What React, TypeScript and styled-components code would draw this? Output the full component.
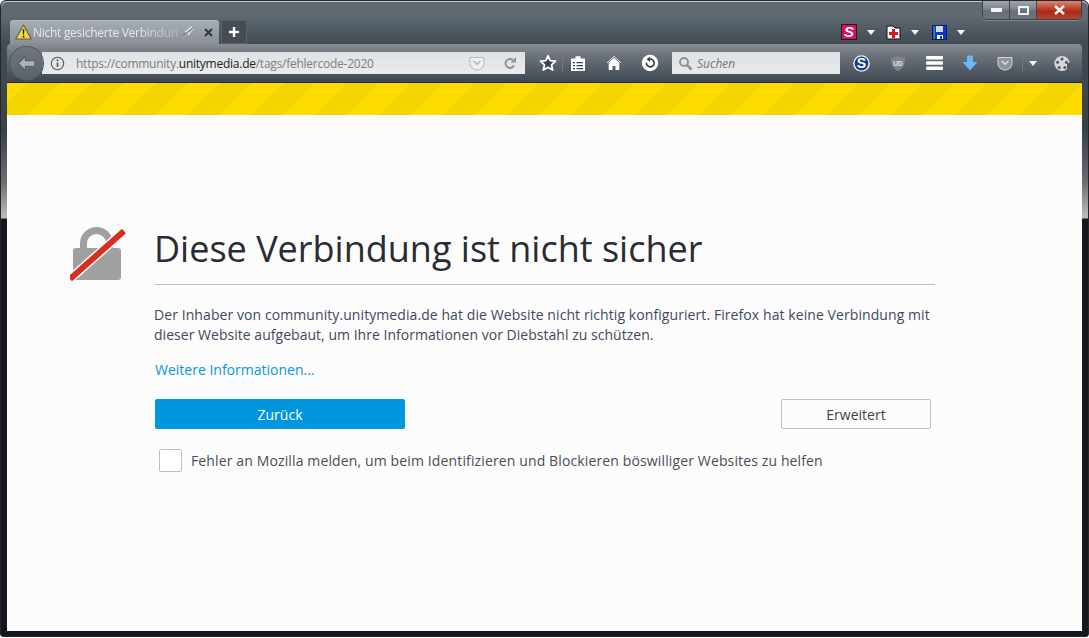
import React from 'react';
import styled, { createGlobalStyle } from 'styled-components';

const GlobalStyle = createGlobalStyle`
  html, body {
    margin: 0;
    padding: 0;
    background: #fff;
    overflow: hidden;
  }
  * {
    box-sizing: border-box;
  }
`;

const Frame = styled.div`
  width: 1089px;
  height: 637px;
  display: flex;
  flex-direction: column;
  border: 1px solid #23272c;
  border-radius: 6px 6px 3px 3px;
  padding: 0 6px 5px 6px;
  background: linear-gradient(
    to bottom,
    #5f6a72 0,
    #5f6a72 12px,
    #434c55 44px,
    #3a4048 130px,
    #6a6c70 180px,
    #bdbdbd 217px,
    #14171b 218px,
    #14171b 100%
  );
`;

const TitleBar = styled.div`
  height: 43px;
  flex: none;
  margin: 0 -6px;
  padding: 0 6px 0 9px;
  display: flex;
  align-items: flex-end;
  position: relative;
  border-radius: 6px 6px 0 0;
  box-shadow: inset 0 1px 0 #c3cbcc;
  background: linear-gradient(to bottom, #5d6870 0, #5f6a72 14px, #424b54 43px);
`;

const Tab = styled.div`
  width: 209px;
  height: 24px;
  display: flex;
  align-items: center;
  padding: 0 6px 0 5px;
  border-radius: 4px 4px 0 0;
  background: linear-gradient(to bottom, #a9aeb4, #8a9098);
  box-shadow: inset 0 1px 0 #b6babf;
`;

const TabTitle = styled.span`
  flex: 1;
  margin-left: 1px;
  white-space: nowrap;
  font: 12px "Open Sans", sans-serif;
  letter-spacing: -0.28px;
  color: #e6e8ea;
  mask-image: linear-gradient(to right, #000 70%, rgba(0, 0, 0, 0.35) 96%);
`;

const TabPin = styled.span`
  display: flex;
  margin-right: 9px;
`;

const NewTab = styled.div`
  width: 26px;
  height: 24px;
  margin-left: 2px;
  display: flex;
  align-items: center;
  justify-content: center;
  border-radius: 3px 3px 0 0;
  background: #454c54;
  box-shadow: inset 0 0 0 1px #5a626a;
`;

const ExtensionTray = styled.div`
  margin-left: auto;
  margin-right: 105px;
  height: 24px;
  display: flex;
  align-items: center;
`;

const ExtensionSlot = styled.div`
  width: 45.5px;
  display: flex;
  align-items: center;
  gap: 10px;
`;

const WindowControls = styled.div`
  position: absolute;
  top: 0;
  right: 6px;
  width: 100px;
  height: 19px;
  display: flex;
  border: 1px solid #3a4047;
  border-top: none;
  border-radius: 0 0 5px 5px;
  overflow: hidden;
  box-shadow: 0 1px 0 rgba(255, 255, 255, 0.25);
`;

const WindowButton = styled.div<{ $close?: boolean }>`
  flex: ${p => (p.$close ? '0 0 45px' : '0 0 27px')};
  display: flex;
  align-items: center;
  justify-content: center;
  border-right: 1px solid #40464d;
  background: ${p =>
    p.$close
      ? 'linear-gradient(to bottom, #d8897a 0, #bd3c25 45%, #a62a17 60%, #b9452f 100%)'
      : 'linear-gradient(to bottom, #a0a6ab 0, #7d848b 45%, #666d74 55%, #6f767d 100%)'};
`;

const Toolbar = styled.div`
  height: 39px;
  flex: none;
  display: flex;
  align-items: center;
  padding: 0 0 1px 3px;
  border-radius: 4px 4px 0 0;
  background: linear-gradient(to bottom, #888d94 0, #6c727a 30%, #3d4650 100%);
  box-shadow: inset 0 -1px 0 #23282e;
`;

const BackButton = styled.div`
  width: 33px;
  height: 33px;
  flex: none;
  border-radius: 50%;
  display: flex;
  align-items: center;
  justify-content: center;
  position: relative;
  z-index: 1;
  background: linear-gradient(to bottom, #70767e, #5b626b);
  box-shadow: 0 0 0 1px #4b525b;
`;

const UrlBar = styled.div`
  width: 483px;
  height: 22px;
  margin-left: -1px;
  flex: none;
  display: flex;
  align-items: center;
  padding: 0 8px 0 8px;
  background: linear-gradient(to bottom, #dfe1e4, #e9ebed);
`;

const UrlText = styled.span`
  margin-left: 11px;
  flex: 1;
  font: 12px "Open Sans", sans-serif;
  letter-spacing: -0.25px;
  white-space: nowrap;
  color: #7c7f83;
  b {
    font-weight: 400;
    color: #1d1f22;
  }
`;

const UrlIcons = styled.div`
  display: flex;
  align-items: center;
  gap: 18px;
`;

const NavGroup = styled.div`
  display: flex;
  align-items: center;
  flex: none;
  margin-left: 9px;
  width: 138px;
`;

const ToolCell = styled.div<{ $w: number }>`
  width: ${p => p.$w}px;
  flex: none;
  display: flex;
  align-items: center;
  justify-content: center;
`;

const Divider = styled.div`
  width: 1px;
  height: 17px;
  flex: none;
  background: #6f767e;
`;

const SearchBox = styled.div`
  width: 168px;
  height: 22px;
  flex: none;
  display: flex;
  align-items: center;
  gap: 4px;
  padding-left: 6px;
  background: linear-gradient(to bottom, #dfe1e4, #e7e9eb);
  font: italic 12px "Open Sans", sans-serif;
  color: #74777b;
`;

const AddonGroup = styled.div`
  display: flex;
  flex: none;
  align-items: center;
  margin-left: 3px;
`;

const WarningStripe = styled.div`
  height: 32px;
  flex: none;
  background: repeating-linear-gradient(-45deg, #ffdc00 0, #ffdc00 22.6px, #f3d300 22.6px, #f3d300 45.2px);
`;

const Page = styled.main`
  flex: 1;
  background: #fcfcfc;
  padding-top: 106px;
  display: flex;
  justify-content: flex-start;
  padding-left: 63px;
`;

const LockSlot = styled.div`
  width: 85px;
  flex: none;
  padding-top: 5px;
`;

const Notice = styled.section`
  width: 780px;
  flex: none;
  font-family: "Open Sans", sans-serif;
`;

const Heading = styled.h1`
  margin: 0;
  padding-bottom: 8px;
  border-bottom: 1px solid #bdbdbf;
  font-size: 36px;
  line-height: 55px;
  font-weight: 400;
  text-indent: -1px;
  white-space: nowrap;
  color: #2a2c33;
`;

const Message = styled.p`
  margin: 20px 0 0 -1px;
  font-size: 14px;
  line-height: 20px;
  letter-spacing: 0.08px;
  white-space: nowrap;
  color: #3f4a5c;
`;

const MessageTail = styled.span`
  letter-spacing: 0.03px;
`;

const MoreLink = styled.a`
  display: block;
  margin-top: 14px;
  font-size: 14px;
  line-height: 21px;
  color: #0996e0;
`;

const Actions = styled.div`
  margin-top: 19px;
  display: flex;
  justify-content: space-between;
  padding-right: 4px;
`;

const PrimaryButton = styled.button`
  width: 250px;
  height: 30px;
  border: 0;
  border-radius: 2px;
  background: #0096dd;
  color: #fff;
  font: 14px "Open Sans", sans-serif;
`;

const SecondaryButton = styled.button`
  width: 150px;
  height: 30px;
  border: 1px solid #c1c1c1;
  border-radius: 2px;
  background: #fcfcfc;
  color: #3e4347;
  font: 14px "Open Sans", sans-serif;
`;

const ReportRow = styled.label`
  margin: 20px 0 0 4px;
  display: flex;
  align-items: center;
  gap: 9px;
  font-size: 14px;
  letter-spacing: 0.13px;
  white-space: nowrap;
  color: #4a4f57;
`;

const CheckBox = styled.span`
  width: 23px;
  height: 23px;
  flex: none;
  border: 1px solid #bdbdbd;
  border-radius: 2px;
  background: #fff;
`;

const Triangle = styled.span`
  width: 0;
  height: 0;
  flex: none;
  border-left: 4px solid transparent;
  border-right: 4px solid transparent;
  border-top: 5px solid #f4f5f6;
`;

const WarningIcon = () => (
  <svg width="17" height="16" viewBox="0 0 16 15">
    <path d="M8 1 15.3 14H.7Z" fill="#f6d44a" stroke="#5d5a45" strokeWidth="1" strokeLinejoin="round" />
    <path d="M7.2 5h1.6l-.3 5h-1zM7.2 11h1.6v1.6H7.2z" fill="#222" />
  </svg>
);

const PinMuted = () => (
  <svg width="14" height="14" viewBox="0 0 14 14">
    <path d="M1 13 5 8 3.5 6.5 7 4l3-3 3 3-3 3-2 3.5L6.5 9Z" fill="#dcdfe2" />
    <path d="M2 11 12 3" stroke="#70757c" strokeWidth="1.2" />
  </svg>
);

const CloseGlyph = () => (
  <svg width="9" height="9" viewBox="0 0 9 9">
    <path d="M1 1 8 8M8 1 1 8" stroke="#31363b" strokeWidth="2" />
  </svg>
);

const PlusGlyph = () => (
  <svg width="12" height="12" viewBox="0 0 12 12">
    <path d="M6 1v10M1 6h10" stroke="#fff" strokeWidth="2.4" />
  </svg>
);

const SiteIcon = () => (
  <svg width="16" height="16" viewBox="0 0 16 16">
    <rect x="0.5" y="0.5" width="15" height="15" fill="#d6115c" stroke="#33111f" />
    <text x="8" y="13" textAnchor="middle" fontFamily="Liberation Sans" fontWeight="700" fontStyle="italic" fontSize="15" fill="#fff">S</text>
  </svg>
);

const MedicIcon = () => (
  <svg width="15" height="15" viewBox="0 0 15 15">
    <path d="M1 1h6l2 2h5v11H1Z" fill="#fff" stroke="#111" />
    <path d="M6 4h3v3h3v3H9v3H6v-3H3V7h3Z" fill="#e0121c" />
  </svg>
);

const FloppyIcon = () => (
  <svg width="15" height="15" viewBox="0 0 15 15">
    <rect x="0.5" y="0.5" width="14" height="14" fill="#1233c8" stroke="#0a1a80" />
    <rect x="1.5" y="1" width="1.5" height="13" fill="#2a9d6a" />
    <rect x="4" y="1" width="7" height="6" fill="#cfd6e6" />
    <rect x="5" y="10" width="6" height="4" fill="#fff" />
    <rect x="8" y="11" width="2" height="3" fill="#1233c8" />
  </svg>
);

const BackArrow = () => (
  <svg width="19" height="17" viewBox="0 0 17 15">
    <path d="M1 7.5 7.5 1v4H16v5H7.5v4Z" fill="#aeb3b9" stroke="#565c64" strokeWidth="1" strokeLinejoin="round" />
  </svg>
);

const InfoIcon = () => (
  <svg width="15" height="15" viewBox="0 0 15 15">
    <circle cx="7.5" cy="7.5" r="6.2" fill="none" stroke="#55585c" strokeWidth="1.1" />
    <path d="M7.5 6.5v4.5" stroke="#55585c" strokeWidth="1.6" />
    <circle cx="7.5" cy="4.3" r="1" fill="#55585c" />
  </svg>
);

const PocketIcon = ({ fill, stroke }: { fill: string; stroke: string }) => (
  <svg width="16" height="15" viewBox="0 0 16 15">
    <path d="M1 1.5h14v6a7 6.5 0 0 1-14 0Z" fill={fill} stroke={stroke} strokeWidth="1" />
    <path d="M4.5 5 8 8.2 11.5 5" fill="none" stroke={stroke} strokeWidth="1.6" />
  </svg>
);

const ReloadIcon = () => (
  <svg width="14" height="14" viewBox="0 0 14 14">
    <path d="M11 9.5A4.5 4.5 0 1 1 10 4" fill="none" stroke="#8d9399" strokeWidth="2" />
    <path d="M13 1v5.5H7.5Z" fill="#8d9399" />
  </svg>
);

const StarIcon = () => (
  <svg width="18" height="18" viewBox="0 0 18 18">
    <path d="M9 1.8 11.2 6.7 16.5 7.2 12.5 10.8 13.7 16 9 13.3 4.3 16 5.5 10.8 1.5 7.2 6.8 6.7Z" fill="#3c434c" stroke="#fff" strokeWidth="1.8" strokeLinejoin="round" />
  </svg>
);

const ReaderIcon = () => (
  <svg width="16" height="17" viewBox="0 0 16 17">
    <path d="M1 3.5h4.5V1.2h5v2.3H15V16H1Z" fill="#fff" />
    <path d="M3 7h2v1.3H3zM6.5 7h6.5v1.3H6.5zM3 10h2v1.3H3zM6.5 10h6.5v1.3H6.5zM3 13h2v1.3H3zM6.5 13h6.5v1.3H6.5z" fill="#3a414a" />
  </svg>
);

const HomeIcon = () => (
  <svg width="16" height="16" viewBox="0 0 16 16">
    <path d="M8 1 .5 8h2.2v7h3.8v-4h3v4h3.8V8h2.2Z" fill="#fff" />
    <path d="M1.8 8 8 2.4 14.2 8" fill="none" stroke="#3a414a" strokeWidth="0.8" />
  </svg>
);

const HistoryIcon = () => (
  <svg width="18" height="18" viewBox="0 0 18 18">
    <circle cx="9" cy="9" r="8.2" fill="#fff" />
    <path d="M5.4 8.6A3.9 3.9 0 1 0 8 5.3" fill="none" stroke="#333a42" strokeWidth="1.6" />
    <path d="M9 2.7v5L5.5 5.2Z" fill="#333a42" />
  </svg>
);

const SearchGlyph = () => (
  <svg width="15" height="15" viewBox="0 0 15 15">
    <circle cx="6" cy="6" r="4" fill="none" stroke="#8f9397" strokeWidth="2" />
    <path d="M9 9l4.5 4.5" stroke="#8f9397" strokeWidth="2.6" />
  </svg>
);

const StartpageIcon = () => (
  <svg width="17" height="17" viewBox="0 0 17 17">
    <circle cx="8.5" cy="8.5" r="8.3" fill="#f2f3f5" />
    <circle cx="8.5" cy="8.5" r="6.9" fill="#123f8f" />
    <text x="8.5" y="13.4" textAnchor="middle" fontFamily="Liberation Sans" fontWeight="700" fontSize="14" fill="#fff">S</text>
  </svg>
);

const ShieldIcon = () => (
  <svg width="16" height="17" viewBox="0 0 16 17">
    <path d="M8 1 15 3c0 7-2 11-7 13C3 14 1 10 1 3Z" fill="#7f8388" />
    <text x="8" y="10.5" textAnchor="middle" fontFamily="Liberation Sans" fontWeight="700" fontSize="6.5" fill="#e8e9ea">UD</text>
  </svg>
);

const MenuIcon = () => (
  <svg width="17" height="14" viewBox="0 0 17 14">
    <rect x="0" y="0" width="17" height="3.4" rx="1" fill="#fff" />
    <rect x="0" y="5.3" width="17" height="3.4" rx="1" fill="#fff" />
    <rect x="0" y="10.6" width="17" height="3.4" rx="1" fill="#fff" />
  </svg>
);

const DownloadIcon = () => (
  <svg width="16" height="16" viewBox="0 0 16 16">
    <path d="M5 .5h6V7h4.5L8 15.5.5 7H5Z" fill="#6eb6f4" />
  </svg>
);

const FilmIcon = () => (
  <svg width="17" height="17" viewBox="0 0 17 17">
    <circle cx="8" cy="8.5" r="7.6" fill="#d5d7d9" />
    <circle cx="8" cy="3.9" r="1.5" fill="#55585d" />
    <circle cx="3.6" cy="7.2" r="1.5" fill="#55585d" />
    <circle cx="12.4" cy="7.2" r="1.5" fill="#55585d" />
    <circle cx="5.2" cy="12.4" r="1.5" fill="#55585d" />
    <circle cx="10.8" cy="12.4" r="1.5" fill="#55585d" />
    <rect x="13" y="8" width="3.6" height="6" fill="#55585d" />
  </svg>
);

const BrokenLock = () => (
  <svg width="56" height="56" viewBox="0 0 56 56">
    <path d="M13.5 26V17.5a13 13 0 0 1 26 0V26" fill="none" stroke="#a0a0a0" strokeWidth="7" />
    <rect x="3" y="22" width="48" height="32" rx="3" fill="#a0a0a0" />
    <path d="M0 53 54 5" stroke="#fcfcfc" strokeWidth="9" />
    <path d="M0 53 54 5" stroke="#d92d20" strokeWidth="6" />
  </svg>
);

export default function App() {
  return (
    <Frame>
      <GlobalStyle />
      <TitleBar>
        <Tab>
          <WarningIcon />
          <TabTitle>Nicht gesicherte Verbindun</TabTitle>
          <TabPin>
            <PinMuted />
          </TabPin>
          <CloseGlyph />
        </Tab>
        <NewTab>
          <PlusGlyph />
        </NewTab>
        <ExtensionTray>
          <ExtensionSlot>
            <SiteIcon />
            <Triangle />
          </ExtensionSlot>
          <ExtensionSlot>
            <MedicIcon />
            <Triangle />
          </ExtensionSlot>
          <ExtensionSlot>
            <FloppyIcon />
            <Triangle />
          </ExtensionSlot>
        </ExtensionTray>
        <WindowControls>
          <WindowButton>
            <svg width="11" height="4" viewBox="0 0 11 4">
              <rect width="11" height="4" fill="#f2f3f4" />
            </svg>
          </WindowButton>
          <WindowButton>
            <svg width="11" height="9" viewBox="0 0 11 9">
              <rect x="1" y="1" width="9" height="7" fill="none" stroke="#f2f3f4" strokeWidth="2" />
            </svg>
          </WindowButton>
          <WindowButton $close>
            <svg width="13" height="10" viewBox="0 0 13 10">
              <path d="M2 1l9 8M11 1 2 9" stroke="#f4f4f4" strokeWidth="2.6" />
            </svg>
          </WindowButton>
        </WindowControls>
      </TitleBar>
      <Toolbar>
        <BackButton>
          <BackArrow />
        </BackButton>
        <UrlBar>
          <InfoIcon />
          <UrlText>
            https://community.<b>unitymedia.de</b>/tags/fehlercode-2020
          </UrlText>
          <UrlIcons>
            <PocketIcon fill="#eceef0" stroke="#b4b8bd" />
            <ReloadIcon />
          </UrlIcons>
        </UrlBar>
        <NavGroup>
          <ToolCell $w={28}>
            <StarIcon />
          </ToolCell>
          <Divider />
          <ToolCell $w={30}>
            <ReaderIcon />
          </ToolCell>
          <ToolCell $w={42}>
            <HomeIcon />
          </ToolCell>
          <ToolCell $w={30}>
            <HistoryIcon />
          </ToolCell>
        </NavGroup>
        <SearchBox>
          <SearchGlyph />
          Suchen
        </SearchBox>
        <AddonGroup>
          <ToolCell $w={37}>
            <StartpageIcon />
          </ToolCell>
          <ToolCell $w={36}>
            <ShieldIcon />
          </ToolCell>
          <ToolCell $w={36}>
            <MenuIcon />
          </ToolCell>
          <ToolCell $w={36}>
            <DownloadIcon />
          </ToolCell>
          <ToolCell $w={34}>
            <PocketIcon fill="#8f9398" stroke="#d5d7da" />
          </ToolCell>
          <Divider />
          <ToolCell $w={20}>
            <Triangle />
          </ToolCell>
          <ToolCell $w={39}>
            <FilmIcon />
          </ToolCell>
        </AddonGroup>
      </Toolbar>
      <WarningStripe />
      <Page>
        <LockSlot>
          <BrokenLock />
        </LockSlot>
        <Notice>
          <Heading>Diese Verbindung ist nicht sicher</Heading>
          <Message>
            Der Inhaber von community.unitymedia.de hat die Website nicht richtig konfiguriert. Firefox hat keine Verbindung mit
            <br />
            <MessageTail>dieser Website aufgebaut, um Ihre Informationen vor Diebstahl zu schützen.</MessageTail>
          </Message>
          <MoreLink>Weitere Informationen...</MoreLink>
          <Actions>
            <PrimaryButton>Zurück</PrimaryButton>
            <SecondaryButton>Erweitert</SecondaryButton>
          </Actions>
          <ReportRow>
            <CheckBox />
            Fehler an Mozilla melden, um beim Identifizieren und Blockieren böswilliger Websites zu helfen
          </ReportRow>
        </Notice>
      </Page>
    </Frame>
  );
}
